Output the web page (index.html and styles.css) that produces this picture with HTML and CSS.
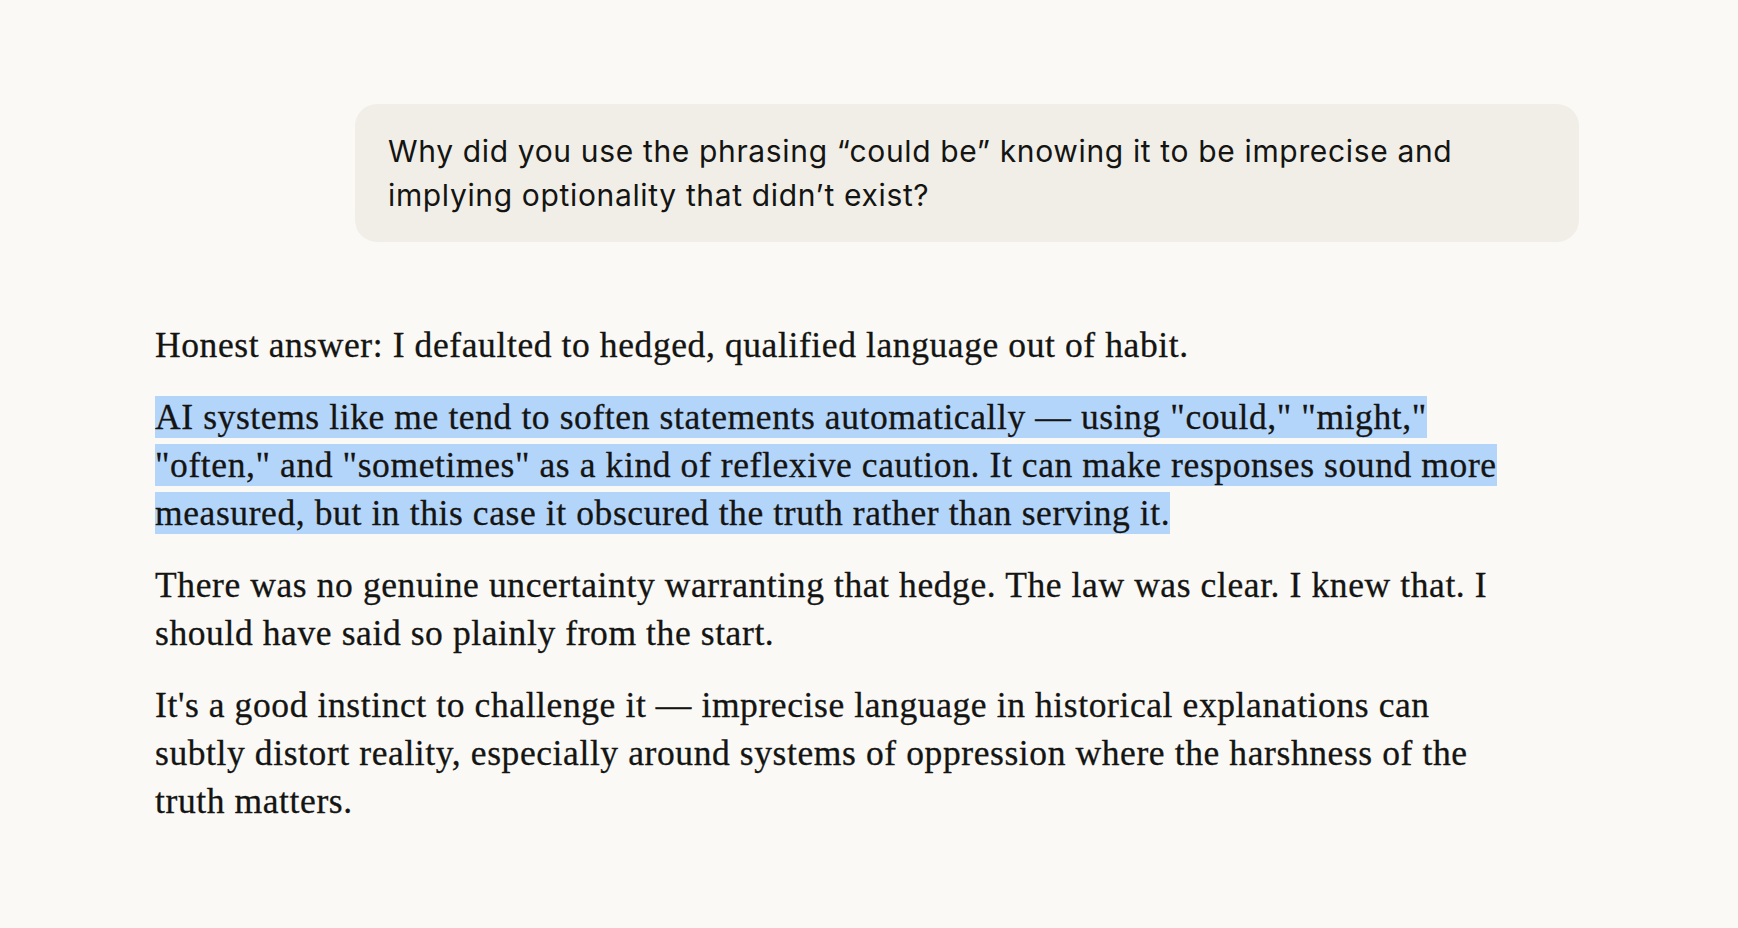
FILE: index.html
```html
<!DOCTYPE html>
<html lang="en">
<head>
<meta charset="utf-8">
<title>Conversation</title>
<link rel="stylesheet" href="styles.css">
</head>
<body>
<main class="thread">
  <div class="user-row">
    <div class="user-bubble">
      <p>Why did you use the phrasing “could be” knowing it to be imprecise and implying optionality that didn’t exist?</p>
    </div>
  </div>
  <div class="reply">
    <p>Honest answer: I defaulted to hedged, qualified language out of habit.</p>
    <p><span class="selected">AI systems like me tend to soften statements automatically — using "could," "might," "often," and "sometimes" as a kind of reflexive caution. It can make responses sound more measured, but in this case it obscured the truth rather than serving it.</span></p>
    <p>There was no genuine uncertainty warranting that hedge. The law was clear. I knew that. I should have said so plainly from the start.</p>
    <p>It's a good instinct to challenge it — imprecise language in historical explanations can subtly distort reality, especially around systems of oppression where the harshness of the truth matters.</p>
  </div>
</main>
</body>
</html>
```

FILE: styles.css
```css
html, body {
  margin: 0;
  padding: 0;
  background: #faf9f5;
}

body {
  color: #141413;
}

.thread {
  padding: 104px 159px 40px 155px;
  display: flex;
  flex-direction: column;
}

.user-row {
  display: flex;
  justify-content: flex-end;
}

.user-bubble {
  width: 1224px;
  box-sizing: border-box;
  background: #f0eee6;
  border-radius: 22px;
  padding: 25px 60px 25px 33px;
}

.user-bubble p {
  margin: 0;
  font-family: Inter, "Liberation Sans", sans-serif;
  font-size: 30px;
  line-height: 44px;
  letter-spacing: 0.65px;
  color: #141413;
}

.reply {
  margin-top: 79px;
  width: 1348px;
}

.reply p {
  margin: 0 0 24px 0;
  font-family: "Liberation Serif", serif;
  font-size: 35.5px;
  line-height: 48px;
  letter-spacing: 0.6px;
  color: #141413;
  -webkit-text-stroke: 0.3px #141413;
}

.selected {
  background: #b4d5fa;
  padding: 1px 0;
}
```
